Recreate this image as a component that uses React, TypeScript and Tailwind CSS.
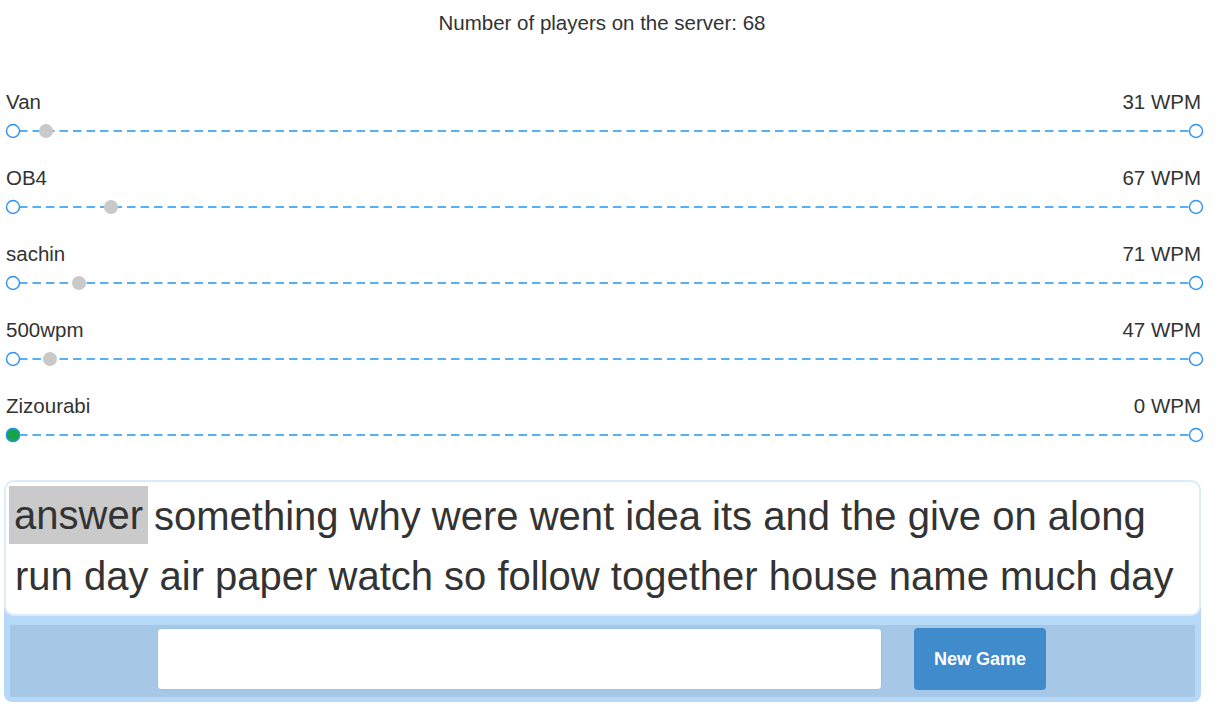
import React from "react";

type Player = {
  name: string;
  wpm: number;
  pos: number;
  me?: boolean;
};

const players: Player[] = [
  { name: "Van", wpm: 31, pos: 46 },
  { name: "OB4", wpm: 67, pos: 111 },
  { name: "sachin", wpm: 71, pos: 79 },
  { name: "500wpm", wpm: 47, pos: 50 },
  { name: "Zizourabi", wpm: 0, pos: 13, me: true },
];

const lineOne = "something why were went idea its and the give on along";
const lineTwo = "run day air paper watch so follow together house name much day";

function Track({ pos, me }: { pos: number; me?: boolean }) {
  return (
    <svg width="1210" height="20" viewBox="0 0 1210 20" className="block">
      <line
        x1="19"
        y1="10"
        x2="1190"
        y2="10"
        stroke="#2196f3"
        strokeWidth="1.4"
        strokeDasharray="8.5 5"
      />
      <circle cx="13" cy="10" r="6.5" fill="#fff" stroke="#2f93f0" strokeWidth="1.4" />
      <circle cx="1196" cy="10" r="6.5" fill="#fff" stroke="#2f93f0" strokeWidth="1.4" />
      {me ? (
        <circle cx={pos} cy="10" r="6.7" fill="#12a54a" stroke="#2f93f0" strokeWidth="1.2" />
      ) : (
        <circle cx={pos} cy="10" r="7" fill="#c9c9c9" />
      )}
    </svg>
  );
}

function PlayerRow({ player }: { player: Player }) {
  return (
    <div className="h-[76px] flex flex-col">
      <div className="h-[26px] flex items-center justify-between pl-[6px] pr-[23px] text-[20.5px]">
        <span>{player.name}</span>
        <span>{player.wpm} WPM</span>
      </div>
      <div className="mt-[6px]">
        <Track pos={player.pos} me={player.me} />
      </div>
    </div>
  );
}

export default function App() {
  return (
    <div
      className="w-[1224px] h-[710px] bg-white text-[#333] overflow-hidden"
      style={{ fontFamily: '"Liberation Sans", Arial, sans-serif' }}
    >
      <div className="h-[46px] flex items-center justify-center pr-[20px] text-[20.5px]">
        Number of players on the server: 68
      </div>

      <div className="mt-[43px]">
        {players.map((p) => (
          <PlayerRow key={p.name} player={p} />
        ))}
      </div>

      <div className="mt-[11px] mx-[4px] w-[1197px]">
        <div className="relative z-10 bg-white border-2 border-[#dcebfa] rounded-[10px] pl-[3px] pr-[4px] pt-[4px] pb-[8px] text-[40px] leading-[60px] text-[#333] whitespace-nowrap">
          <span className="inline-block bg-[#cacaca] px-[5px] leading-[58px] align-top">
            answer
          </span>
          <span className="ml-[6px]">{lineOne}</span>
          <br />
          <span className="pl-[6px]">{lineTwo}</span>
        </div>
        <div className="-mt-[10px] bg-[#b7d9f8] rounded-b-[8px] pt-[19px] pb-[5px] px-[6px]">
          <div className="bg-[#a6c8e6] h-[72px] flex items-start pt-[3px] pl-[147px]">
            <input
              type="text"
              className="w-[725px] h-[62px] bg-white rounded-[4px] border border-[#9fc2e2] outline-none"
            />
            <button className="ml-[32px] w-[132px] h-[62px] bg-[#3f8bcb] rounded-[4px] text-white font-bold text-[18px]">
              New Game
            </button>
          </div>
        </div>
      </div>
    </div>
  );
}
